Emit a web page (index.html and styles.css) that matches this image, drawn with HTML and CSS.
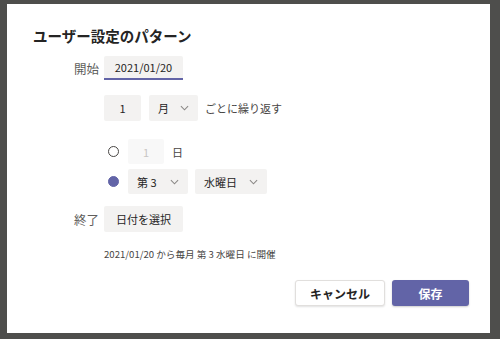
FILE: index.html
```html
<!DOCTYPE html>
<html lang="ja">
<head>
    <meta charset="UTF-8">
    <meta name="viewport" content="width=device-width, initial-scale=1.0">
    <title>ユーザー設定のパターン</title>
    <link rel="stylesheet" href="styles.css">
</head>
<body>
    <div class="dialog">
        <h1 class="title">ユーザー設定のパターン</h1>

        <div class="row row_start">
            <span class="lbl">開始</span>
            <div class="field date">2021/01/20</div>
        </div>

        <div class="row row_repeat">
            <span class="lbl"></span>
            <div class="field num">1</div>
            <div class="field sel sel_month">月
                <svg class="chev" viewBox="0 0 10 6"><polyline points="1,1 5,5 9,1"/></svg>
            </div>
            <span class="txt">ごとに繰り返す</span>
        </div>

        <div class="row row_day">
            <span class="lbl"></span>
            <span class="radio"></span>
            <div class="field num off">1</div>
            <span class="txt">日</span>
        </div>

        <div class="row row_week">
            <span class="lbl"></span>
            <span class="radio on"></span>
            <div class="field sel sel_nth">第 3
                <svg class="chev" viewBox="0 0 10 6"><polyline points="1,1 5,5 9,1"/></svg>
            </div>
            <div class="field sel sel_dow">水曜日
                <svg class="chev" viewBox="0 0 10 6"><polyline points="1,1 5,5 9,1"/></svg>
            </div>
        </div>

        <div class="row row_end">
            <span class="lbl">終了</span>
            <div class="field pick">日付を選択</div>
        </div>

        <div class="row row_sum">
            <span class="lbl"></span>
            <span class="summary">2021/01/20 から毎月 第 3 水曜日 に開催</span>
        </div>

        <div class="actions">
            <button class="btn btn_cancel">キャンセル</button>
            <button class="btn btn_save">保存</button>
        </div>
    </div>
</body>
</html>
```

FILE: styles.css
```css
* {
  box-sizing: border-box;
  font-family: "Noto Sans CJK JP", "Noto Sans", sans-serif;
}
body {
  margin: 0;
  height: 339px;
  background: #4e4e4c;
  overflow: hidden;
}
.dialog {
  margin: 4px 0 0 7px;
  width: 483px;
  height: 329px;
  background: #ffffff;
  padding: 22px 21px 0 26px;
  display: flex;
  flex-direction: column;
  color: #252424;
}
.title {
  margin: 0;
  font-size: 14.5px;
  line-height: 20px;
  font-weight: 700;
  color: #252424;
}
.row {
  display: flex;
  align-items: center;
  font-size: 11px;
}
.lbl {
  width: 66px;
  flex: none;
  text-align: right;
  margin-right: 5px;
  font-size: 12.5px;
  color: #605e5c;
}
.field {
  height: 26px;
  background: #f3f2f1;
  border-radius: 2px;
  display: flex;
  align-items: center;
  color: #252424;
}
.row_start {
  margin-top: 10px;
}
.date {
  width: 79px;
  height: 24px;
  justify-content: center;
  border-bottom: 2px solid #6264a7;
  border-radius: 2px 2px 0 0;
}
.row_repeat {
  margin-top: 15px;
}
.num {
  width: 37px;
  justify-content: center;
  margin-right: 8px;
}
.sel {
  padding: 0 9px;
  justify-content: space-between;
}
.chev {
  width: 9px;
  height: 6px;
  fill: none;
  stroke: #8a8886;
  stroke-width: 1.2;
}
.sel_month {
  width: 49px;
}
.txt {
  margin-left: 7px;
  color: #484644;
}
.row_day {
  margin-top: 18px;
}
.radio {
  width: 11px;
  height: 11px;
  border-radius: 50%;
  border: 1px solid #484644;
  margin: 0 9px 0 4px;
  flex: none;
}
.radio.on {
  border-color: #6264a7;
  background: #6264a7;
}
.off {
  color: #c8c6c4;
  background: #f8f8f8;
  width: 36px;
  height: 25px;
}
.row_day .txt {
  margin-left: 0;
}
.row_week {
  margin-top: 5px;
}
.sel_nth {
  width: 60px;
  height: 25px;
  margin-right: 7px;
}
.sel_dow {
  width: 72px;
  height: 25px;
}
.row_end {
  margin-top: 12px;
}
.pick {
  width: 79px;
  justify-content: center;
}
.row_sum {
  margin-top: 15px;
}
.summary {
  font-size: 9.6px;
  color: #484644;
}
.actions {
  display: flex;
  justify-content: flex-end;
  gap: 7px;
  margin-top: 19px;
}
.btn {
  height: 26px;
  border-radius: 3px;
  font-size: 12px;
  font-weight: 700;
  cursor: pointer;
}
.btn_cancel {
  width: 90px;
  background: #ffffff;
  color: #252424;
  border: 1px solid #e1dfdd;
  box-shadow: 0 1px 2px rgba(0, 0, 0, 0.12);
}
.btn_save {
  width: 77px;
  background: #6264a7;
  color: #ffffff;
  border: none;
  box-shadow: 0 1px 2px rgba(0, 0, 0, 0.2);
}
```
